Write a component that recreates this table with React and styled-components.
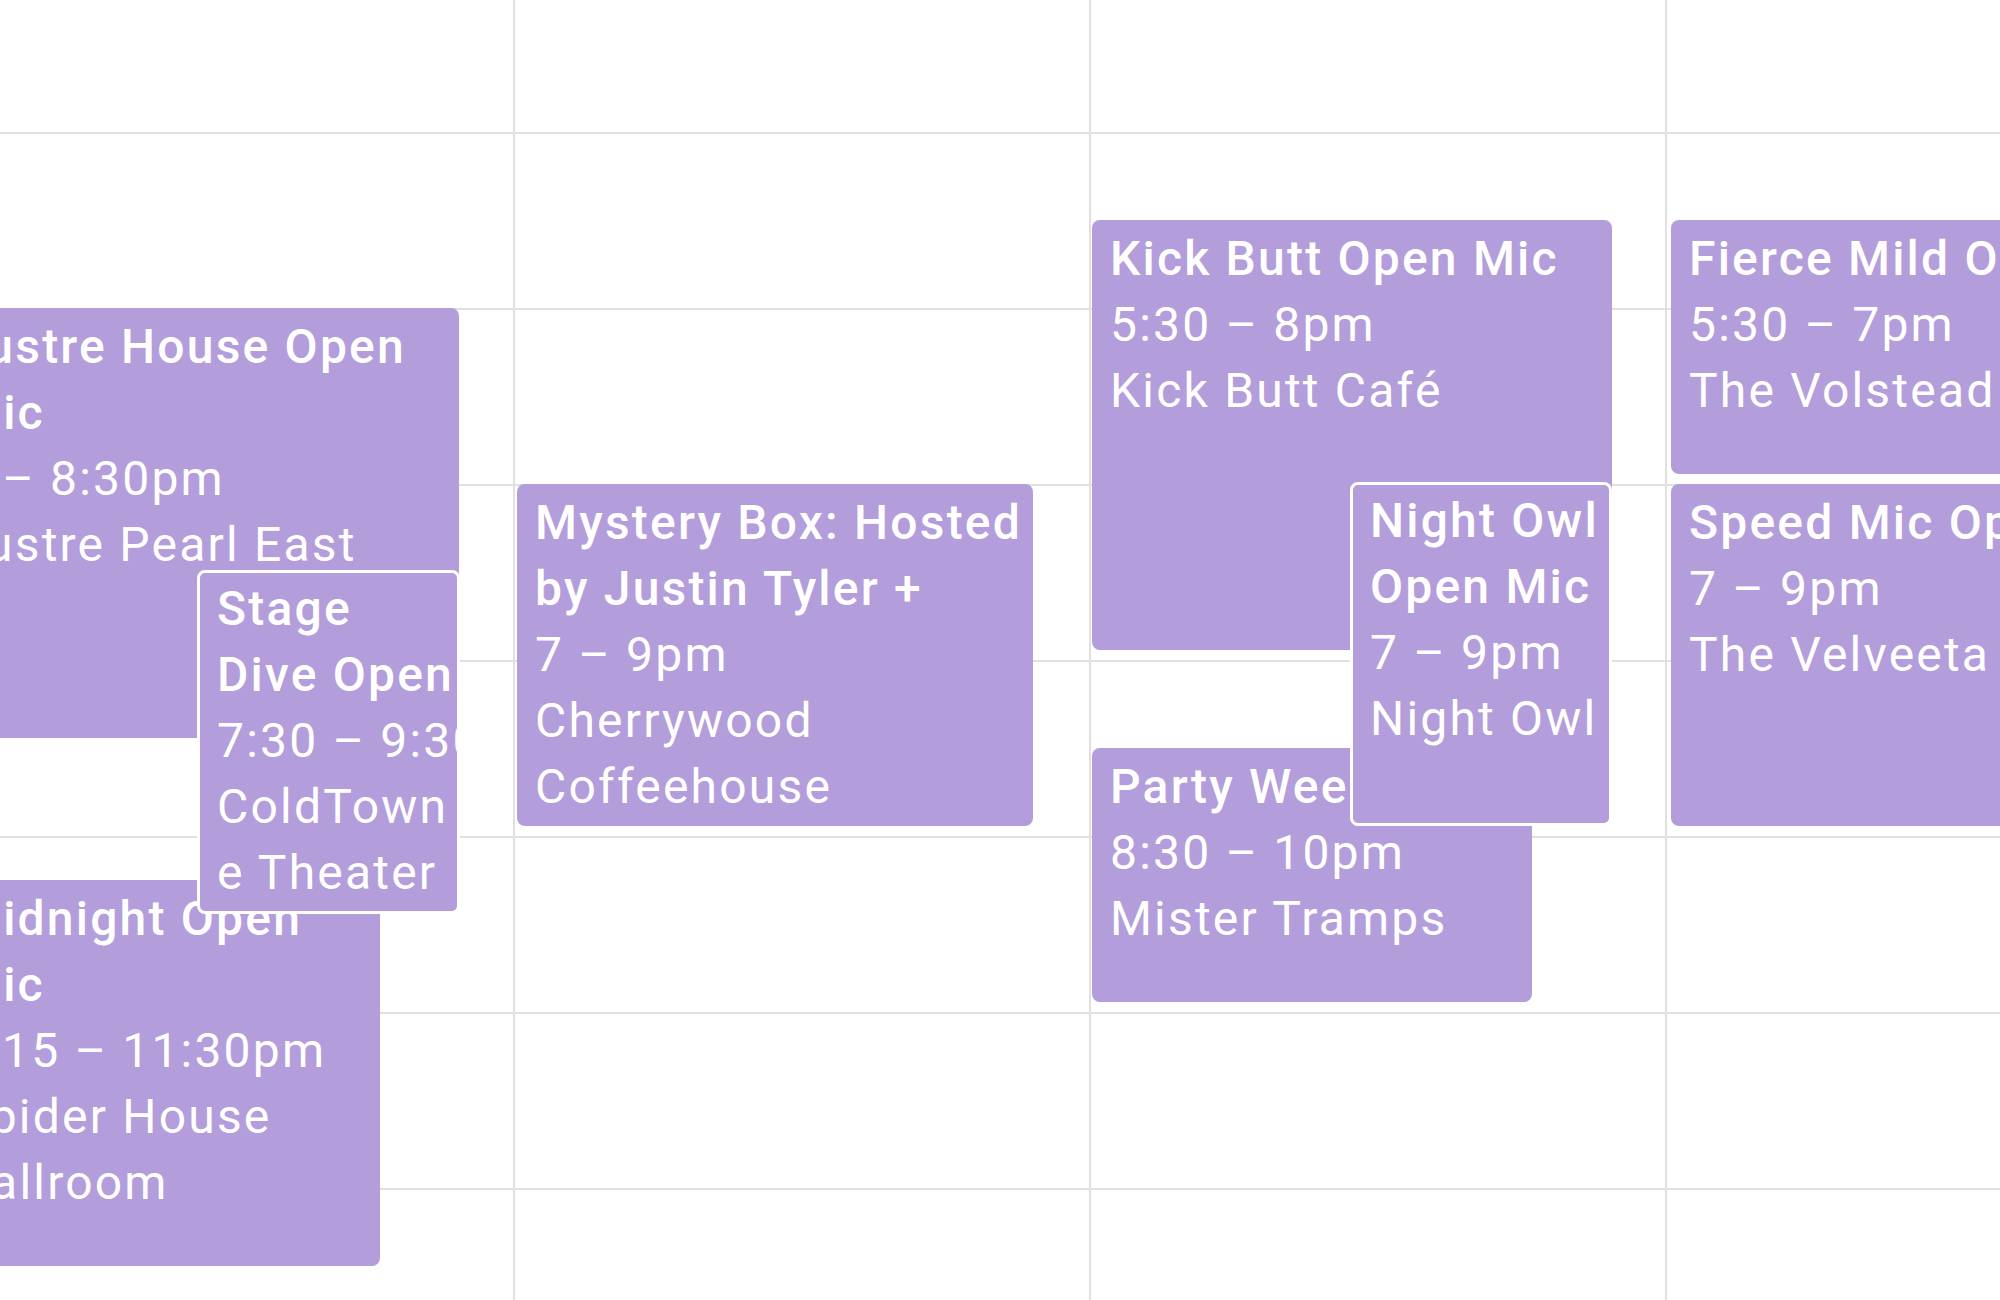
import React from 'react';
import styled, { createGlobalStyle } from 'styled-components';

const HOUR = 176;
const FIRST_HOUR = 16;
const SLOTS = 8;
const LINE = 66;

const GlobalStyle = createGlobalStyle`
  html, body {
    margin: 0;
    padding: 0;
    background: #fff;
  }
  body {
    font-family: Roboto, "Noto Sans", "Liberation Sans", sans-serif;
  }
`;

const Viewport = styled.div`
  width: 2000px;
  height: 1300px;
  overflow: hidden;
  background: #fff;
`;

const Week = styled.div`
  display: flex;
  margin: -42px 0 0 -61px;
`;

const DayColumn = styled.div`
  position: relative;
  flex: 0 0 576px;
  box-sizing: border-box;
  border-right: 2px solid #e0e0e0;
`;

const HourSlot = styled.div`
  height: ${HOUR}px;
  box-sizing: border-box;
  border-bottom: 2px solid #e0e0e0;
`;

const EventCard = styled.div`
  position: absolute;
  box-sizing: border-box;
  padding: ${({ $stacked }) => ($stacked ? '3px 0 0 17px' : '6px 2px 0 18px')};
  border: ${({ $stacked }) => ($stacked ? '3px solid #fff' : 'none')};
  border-radius: 8px;
  background: #b39ddb;
  color: #fff;
  overflow: hidden;
  font-size: 48px;
  line-height: ${LINE}px;
  letter-spacing: 2.2px;
`;

const Title = styled.div`
  font-weight: 500;
  max-height: ${({ $lines }) => $lines * LINE}px;
  overflow: hidden;
  white-space: ${({ $lines }) => ($lines === 1 ? 'nowrap' : 'normal')};
`;

const Time = styled.div`
  white-space: nowrap;
`;

const Place = styled.div`
  overflow-wrap: break-word;
`;

const days = [
  [
    { start: 18, end: 20.5, left: 2, width: 518, title: 'Lustre House Open Mic', time: '6 – 8:30pm', place: 'Lustre Pearl East' },
    { start: 21.25, end: 23.5, left: 2, width: 439, title: 'Midnight Open Mic', time: '9:15 – 11:30pm', place: 'Spider House Ballroom' },
    { start: 19.5, end: 21.5, left: 258, width: 263, stacked: true, title: 'Stage Dive Open Mic', time: '7:30 – 9:30pm', place: 'ColdTowne Theater' },
  ],
  [
    { start: 19, end: 21, left: 2, width: 516, title: 'Mystery Box: Hosted by Justin Tyler + Friends', time: '7 – 9pm', place: 'Cherrywood Coffeehouse' },
  ],
  [
    { start: 17.5, end: 20, left: 1, width: 520, title: 'Kick Butt Open Mic', time: '5:30 – 8pm', place: 'Kick Butt Café' },
    { start: 20.5, end: 22, left: 1, width: 440, lines: 1, title: 'Party Weekend Open Mic', time: '8:30 – 10pm', place: 'Mister Tramps' },
    { start: 19, end: 21, left: 259, width: 262, stacked: true, title: 'Night Owl Open Mic', time: '7 – 9pm', place: 'Night Owl' },
  ],
  [
    { start: 17.5, end: 19, left: 4, width: 518, lines: 1, title: 'Fierce Mild Open Mic', time: '5:30 – 7pm', place: 'The Volstead' },
    { start: 19, end: 21, left: 4, width: 518, lines: 1, title: 'Speed Mic Open Mic', time: '7 – 9pm', place: 'The Velveeta' },
  ],
];

function CalendarEvent({ ev }) {
  const shift = ev.stacked ? 4 : 2;
  const top = (ev.start - FIRST_HOUR) * HOUR - shift;
  const height = (ev.end - ev.start) * HOUR - 10 + (ev.stacked ? 2 : 0);
  return (
    <EventCard
      $stacked={ev.stacked}
      style={{ top, height, left: ev.left, width: ev.width }}
    >
      <Title $lines={ev.lines || 2}>{ev.title}</Title>
      <Time>{ev.time}</Time>
      <Place>{ev.place}</Place>
    </EventCard>
  );
}

export default function App() {
  return (
    <Viewport>
      <GlobalStyle />
      <Week>
        {days.map((events, d) => (
          <DayColumn key={d}>
            {Array.from({ length: SLOTS }).map((_, i) => (
              <HourSlot key={i} />
            ))}
            {events.map((ev) => (
              <CalendarEvent key={ev.title} ev={ev} />
            ))}
          </DayColumn>
        ))}
      </Week>
    </Viewport>
  );
}
